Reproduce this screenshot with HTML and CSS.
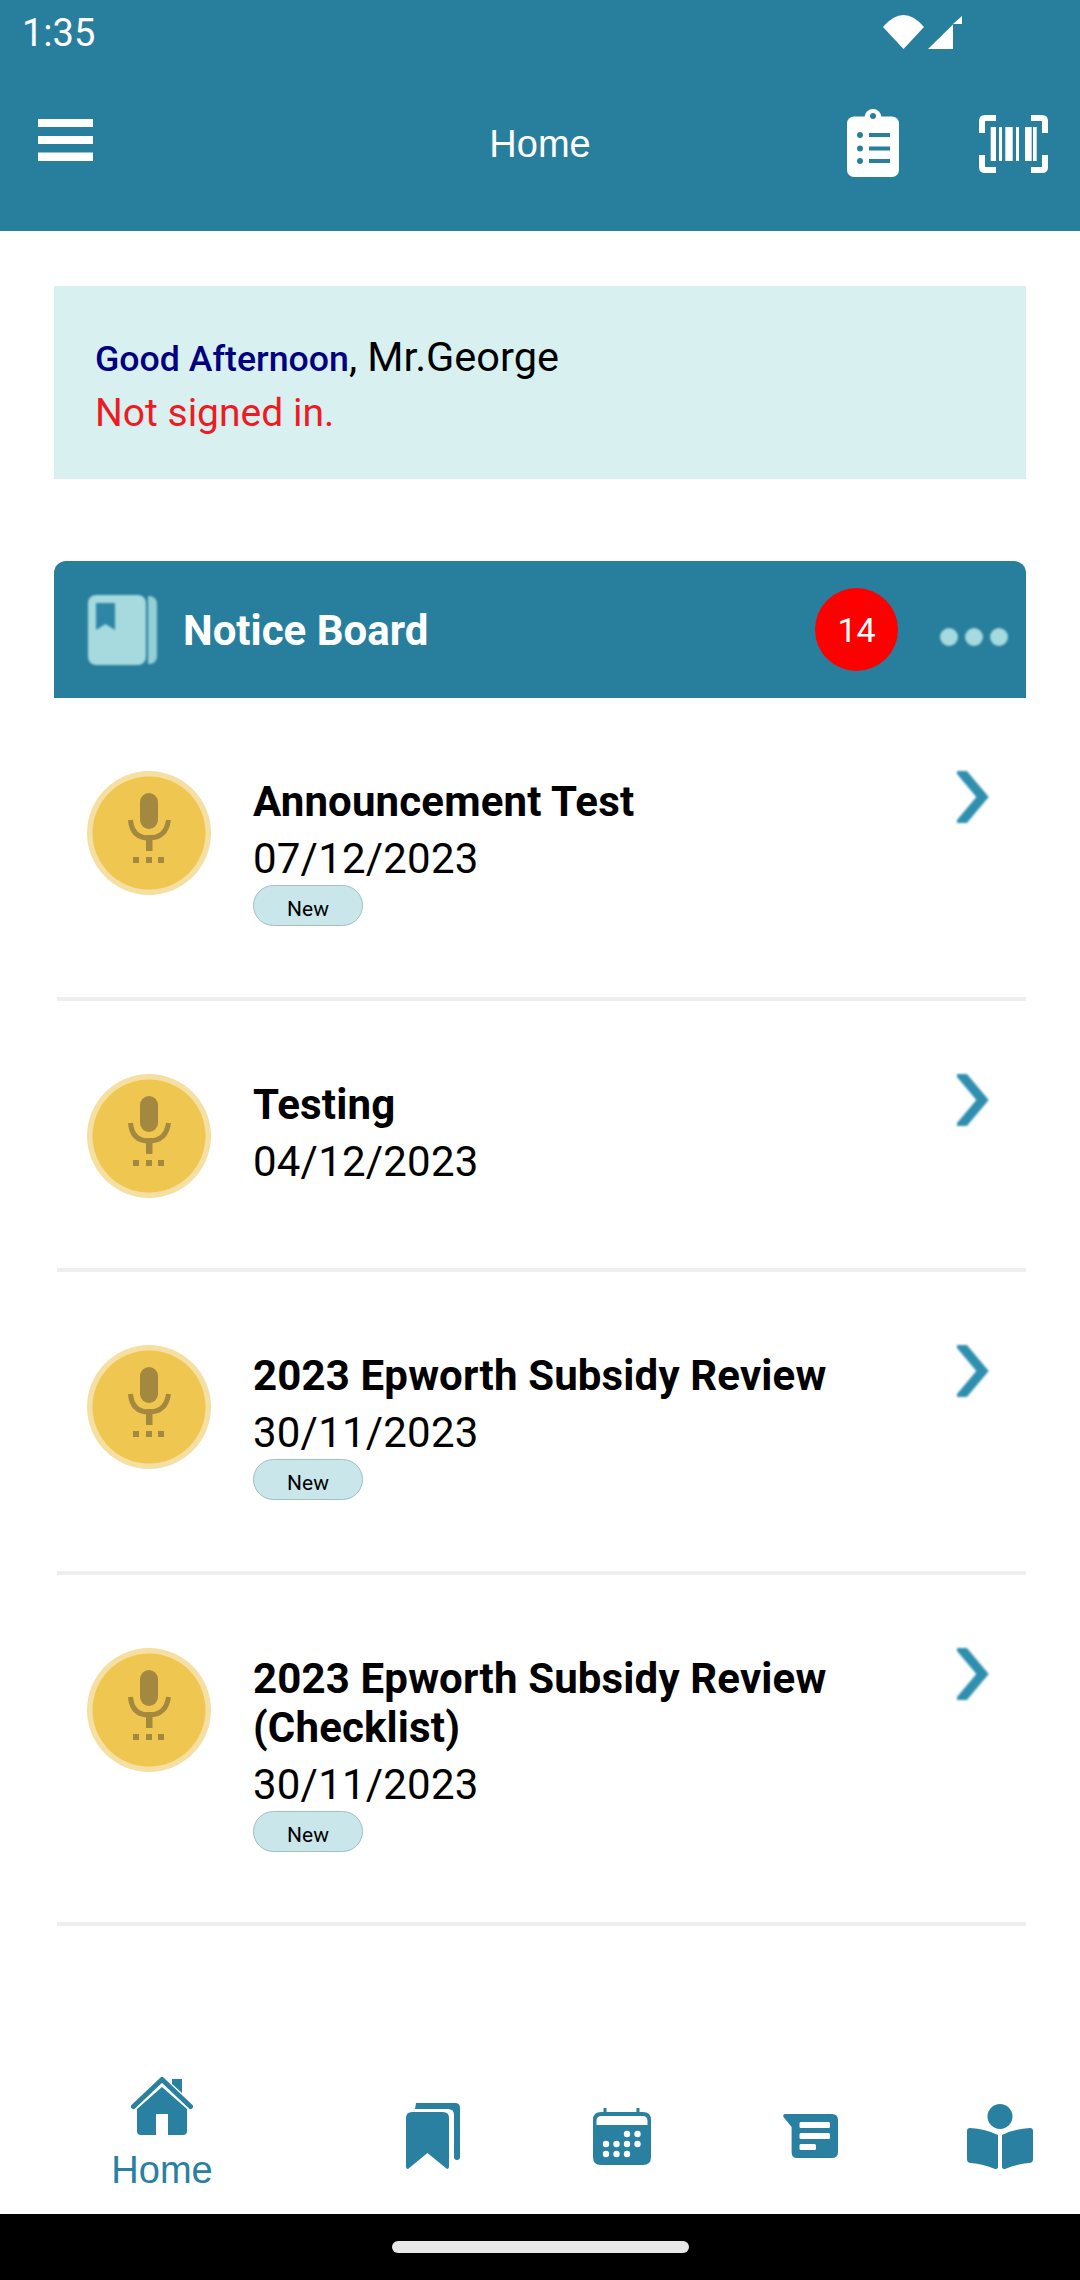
FILE: index.html
```html
<!DOCTYPE html>
<html lang="en">
<head>
<meta charset="utf-8">
<title>Home</title>
<link rel="stylesheet" href="styles.css">
</head>
<body>
<header class="top">
  <div class="status">
    <span class="clock">1:35</span>
    <div class="status-icons">
      <svg class="i-wifi" viewBox="0 0 41 34"><path d="M0 12Q20.5-12 41 12L20.5 34Z"/></svg>
      <svg class="i-signal" viewBox="0 0 34 33"><path d="M0 33L25 8.500V33ZM25 8L34 0V8Z"/></svg>
    </div>
  </div>
  <div class="appbar">
    <svg class="i-menu" viewBox="0 0 55 42"><rect width="55" height="8"/><rect y="17" width="55" height="8"/><rect y="33.500" width="55" height="8.500"/></svg>
    <div class="title">Home</div>
    <div class="actions">
      <svg class="i-clip" viewBox="0 0 52 68">
        <circle cx="26" cy="8.500" r="8.500" fill="#fff"/>
        <rect y="7.500" width="52" height="60.500" rx="7" fill="#fff"/>
        <g fill="#287e9d">
          <circle cx="26" cy="7" r="3"/>
          <circle cx="13" cy="26" r="3"/><circle cx="13" cy="39.500" r="3"/><circle cx="13" cy="52" r="3"/>
          <rect x="22" y="24" width="21" height="4"/><rect x="22" y="37.500" width="21" height="4"/><rect x="22" y="50" width="21" height="4"/>
        </g>
      </svg>
      <svg class="i-code" viewBox="0 0 69 58">
        <g fill="none" stroke="#fff" stroke-width="6">
          <path d="M17 3H6Q3 3 3 6V18"/><path d="M52 3H63Q66 3 66 6V18"/>
          <path d="M17 55H6Q3 55 3 52V40"/><path d="M52 55H63Q66 55 66 52V40"/>
        </g>
        <g fill="#fff">
          <rect x="11.700" y="12" width="5.300" height="34"/><rect x="20" y="12" width="3" height="34"/>
          <rect x="26.300" y="12" width="7.400" height="34"/><rect x="37" y="12" width="3" height="34"/>
          <rect x="46" y="12" width="6.700" height="34"/><rect x="54" y="12" width="3.700" height="34"/>
        </g>
      </svg>
    </div>
  </div>
</header>

<main class="content">
  <section class="greeting">
    <div class="hello"><span class="hello-lead">Good Afternoon</span>, Mr.George</div>
    <div class="signed">Not signed in.</div>
  </section>

  <section class="board">
    <div class="board-head">
      <svg class="i-book soft" viewBox="0 0 69 70">
        <rect x="0" y="0" width="58" height="70" rx="8" fill="#a6dade"/>
        <path d="M60 1H62Q69 2 69 9V61Q69 68 62 69H60Z" fill="#93cfd4"/>
        <path d="M8 8H27V35L17.500 29L8 35Z" fill="#2e86a6"/>
      </svg>
      <h2 class="board-title">Notice Board</h2>
      <span class="count">14</span>
      <div class="dots soft"><i></i><i></i><i></i></div>
    </div>

    <ul class="notices">
      <li class="notice">
        <svg class="mic" viewBox="0 0 124 124"><use href="#mic-art"/></svg>
        <div class="notice-body">
          <div class="notice-title">Announcement Test</div>
          <div class="notice-date">07/12/2023</div>
          <span class="chip">New</span>
        </div>
        <svg class="chev soft" viewBox="0 0 32 52"><path d="M2-2L25.500 26L2 54"/></svg>
      </li>
      <li class="notice">
        <svg class="mic" viewBox="0 0 124 124"><use href="#mic-art"/></svg>
        <div class="notice-body">
          <div class="notice-title">Testing</div>
          <div class="notice-date">04/12/2023</div>
        </div>
        <svg class="chev soft" viewBox="0 0 32 52"><path d="M2-2L25.500 26L2 54"/></svg>
      </li>
      <li class="notice">
        <svg class="mic" viewBox="0 0 124 124"><use href="#mic-art"/></svg>
        <div class="notice-body">
          <div class="notice-title">2023 Epworth Subsidy Review</div>
          <div class="notice-date">30/11/2023</div>
          <span class="chip">New</span>
        </div>
        <svg class="chev soft" viewBox="0 0 32 52"><path d="M2-2L25.500 26L2 54"/></svg>
      </li>
      <li class="notice">
        <svg class="mic" viewBox="0 0 124 124"><use href="#mic-art"/></svg>
        <div class="notice-body">
          <div class="notice-title">2023 Epworth Subsidy Review (Checklist)</div>
          <div class="notice-date">30/11/2023</div>
          <span class="chip">New</span>
        </div>
        <svg class="chev soft" viewBox="0 0 32 52"><path d="M2-2L25.500 26L2 54"/></svg>
      </li>
    </ul>
  </section>
</main>

<nav class="tabs">
  <div class="tab-home">
    <svg class="i-home" viewBox="0 0 62 58">
      <path d="M41 2H51V16L41 7Z" fill="#2a80a0"/>
      <path d="M2.500 29.500L31 2.500L59.500 29.500" fill="none" stroke="#2a80a0" stroke-width="5" stroke-linecap="round" stroke-linejoin="round"/>
      <path d="M31 10L56 32V54Q56 58 52 58H37V37H25V58H10Q6 58 6 54V32Z" fill="#2a80a0"/>
    </svg>
    <span class="tab-label">Home</span>
  </div>
  <div class="tab-icons">
    <svg class="i-marks" viewBox="0 0 54 66">
      <path d="M10 0H49Q54 0 54 5V54A3 3 0 0 1 48 54V12Q48 6 42 6H9Z" fill="#2a80a0"/>
      <path d="M0 15Q0 9 6 9H37Q43 9 43 15V63Q43 66 41 66L21.500 50L2 66Q0 66 0 63Z" fill="#2a80a0"/>
    </svg>
    <svg class="i-cal" viewBox="0 0 58 57">
      <path d="M10.500 0H13.500V4H43.500V0H46.500V4H50Q58 4 58 12V49Q58 57 50 57H8Q0 57 0 49V12Q0 4 8 4H10.500Z" fill="#2a80a0"/>
      <path d="M3.500 17V13Q3.500 8 8.500 8H49.500Q54.500 8 54.500 13V17Z" fill="#fff"/>
      <g fill="#fff">
        <circle cx="34" cy="26" r="3.200"/><circle cx="44.500" cy="26" r="3.200"/>
        <circle cx="13" cy="36" r="3.200"/><circle cx="23.500" cy="36" r="3.200"/><circle cx="34" cy="36" r="3.200"/><circle cx="44.500" cy="36" r="3.200"/>
        <circle cx="13" cy="46" r="3.200"/><circle cx="23.500" cy="46" r="3.200"/><circle cx="34" cy="46" r="3.200"/>
      </g>
    </svg>
    <svg class="i-msg" viewBox="0 0 55 44">
      <path d="M2 0H49Q55 0 55 6V38Q55 44 49 44H14Q8.600 44 8.600 38V13L0.500 3Q-0.500 0 2 0Z" fill="#2a80a0"/>
      <g fill="#fff"><rect x="16.500" y="8" width="30.500" height="6" rx="1.500"/><rect x="16.500" y="19" width="30.500" height="6" rx="1.500"/><rect x="16.500" y="30" width="16.500" height="6" rx="1.500"/></g>
    </svg>
    <svg class="i-read" viewBox="0 0 66 65">
      <circle cx="33" cy="12.500" r="12.500" fill="#2a80a0"/>
      <path d="M0 27Q0 24 3 24Q19 25 31 31V63Q31 65 28 65Q16 60 4 59Q0 59 0 55Z" fill="#2a80a0"/>
      <path d="M66 27Q66 24 63 24Q47 25 35 31V63Q35 65 38 65Q50 60 62 59Q66 59 66 55Z" fill="#2a80a0"/>
    </svg>
  </div>
</nav>

<footer class="gesture"><div class="handle"></div></footer>

<svg class="defs" width="0" height="0" aria-hidden="true">
  <g id="mic-art">
    <circle cx="62" cy="62" r="62" fill="#f6dfa2"/>
    <circle cx="62" cy="62" r="56.500" fill="#efc750"/>
    <g fill="#a38840">
      <rect x="53" y="22" width="18" height="36" rx="9"/>
      <rect x="59" y="64" width="6.500" height="16"/>
      <rect x="46" y="86" width="6" height="6"/><rect x="59" y="86" width="6" height="6"/><rect x="71" y="86" width="6" height="6"/>
    </g>
    <path d="M43.500 49Q45 67 62 67Q79 67 81.500 49" fill="none" stroke="#a38840" stroke-width="5"/>
  </g>
</svg>
</body>
</html>
```
FILE: styles.css
```css
* { box-sizing: border-box; }
html, body { margin: 0; padding: 0; }
body {
  width: 1080px;
  height: 2280px;
  display: flex;
  flex-direction: column;
  background: #fff;
  font-family: Roboto, "Liberation Sans", sans-serif;
  color: #000;
  overflow: hidden;
}
svg { display: block; flex: none; }
.defs { position: absolute; }
.soft { filter: blur(0.8px); }

/* header */
.top { background: #287e9d; height: 231px; flex: none; color: #fff; }
.status { height: 70px; display: flex; justify-content: space-between; padding: 15px 118px 0 22px; }
.clock { font-size: 38px; line-height: 36px; }
.status-icons { display: flex; gap: 4px; height: 34px; }
.status-icons svg { fill: #fff; }
.i-wifi { width: 41px; height: 34px; }
.i-signal { width: 34px; height: 33px; margin-top: 1px; }
.appbar { height: 145px; display: grid; grid-template-columns: 1fr auto 1fr; align-items: center; padding: 0 32px; }
.i-menu { width: 55px; height: 42px; fill: #fff; margin: 0 0 5px 6px; }
.title { font-family: "Liberation Sans", Arial, sans-serif; font-size: 38px; line-height: 44px; margin-top: 2px; }
.actions { display: flex; justify-content: flex-end; align-items: center; gap: 80px; }
.i-clip { width: 52px; height: 68px; }
.i-code { width: 69px; height: 58px; margin-top: 2px; }

/* content */
.content { flex: 1; padding: 55px 54px 0; }
.greeting { height: 193px; background: #d9f0f1; padding: 43px 41px 0; }
.hello { font-size: 41.500px; line-height: 56px; }
.hello-lead { font-size: 35.700px; font-weight: 500; color: #000080; }
.signed { font-size: 39px; line-height: 52px; color: #ed1c24; }

.board { margin-top: 82px; }
.board-head {
  height: 137px;
  background: #287e9d;
  border-radius: 12px 12px 0 0;
  display: flex;
  align-items: center;
  padding: 0 18px 0 34px;
}
.i-book { width: 69px; height: 70px; }
.board-title { flex: 1; margin: 2px 0 0 26px; font-size: 42px; line-height: 48px; font-weight: 700; color: #fff; }
.count {
  width: 83px; height: 83px; border-radius: 50%;
  background: #ff0000; color: #fff;
  font-size: 34px; line-height: 85px; text-align: center;
}
.dots { display: flex; gap: 7px; margin: 14px 0 0 42px; }
.dots i { display: block; width: 18px; height: 18px; border-radius: 50%; background: #a6dade; }

.notices { list-style: none; margin: 0 0 0 3px; padding: 0; }
.notice {
  display: flex;
  align-items: flex-start;
  padding: 73px 37px 70.500px 30px;
  border-bottom: 4px solid #eeeeee;
}
.mic { width: 124px; height: 124px; }
.notice-body { flex: 1; padding: 6px 90px 0 42px; }
.notice-title { font-size: 42px; line-height: 49px; font-weight: 700; letter-spacing: 0.15px; }
.notice-date { font-size: 42px; line-height: 49px; margin-top: 8px; letter-spacing: 0.2px; }
.chip {
  display: block; width: 110px; height: 41px; margin-top: 2px;
  border: 1px solid #a3bfc4; border-radius: 21px;
  background: #c9e6ea;
  font-size: 21px; line-height: 46px; text-align: center;
}
.chev { width: 32px; height: 52px; fill: none; stroke: #2f8fae; stroke-width: 9.500; }

/* tabs */
.tabs { height: 156px; flex: none; display: flex; align-items: center; }
.tab-home { width: 324px; display: flex; flex-direction: column; align-items: center; padding-bottom: 3px; }
.i-home { width: 62px; height: 58px; }
.tab-label { font-family: "Liberation Sans", Arial, sans-serif; font-size: 38px; line-height: 44px; margin-top: 13px; color: #2a80a0; }
.tab-icons { display: flex; align-items: center; padding-left: 82px; }
.i-marks { width: 54px; height: 66px; margin-right: 133px; }
.i-cal { width: 58px; height: 57px; margin-right: 132px; }
.i-msg { width: 55px; height: 44px; margin-right: 129px; }
.i-read { width: 66px; height: 65px; }

/* gesture bar */
.gesture { height: 66px; flex: none; background: #000; display: flex; justify-content: center; padding-top: 27px; }
.handle { width: 297px; height: 12px; border-radius: 6px; background: #e8e8e8; }
```
